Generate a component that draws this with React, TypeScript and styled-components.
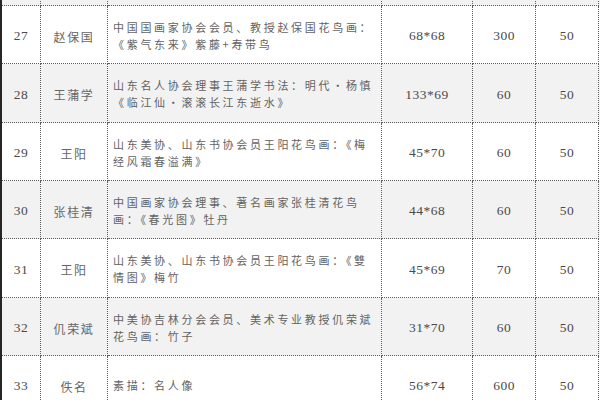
import React from "react";
import styled, { createGlobalStyle } from "styled-components";

const GlobalStyle = createGlobalStyle`
  html, body { margin: 0; padding: 0; background: #ffffff; overflow: hidden; }
`;

const Page = styled.div`
  width: 600px;
  height: 400px;
  overflow: hidden;
  box-sizing: border-box;
  border-left: 2px solid #262626;
  background: #ffffff;
`;

const Table = styled.div`
  display: flex;
  flex-direction: column;
  margin-top: -52px;
`;

const Row = styled.div<{ $shaded: boolean; $tall: boolean }>`
  display: grid;
  grid-template-columns: 39px 67px 274px 91px 63px 63px;
  height: ${(p) => (p.$tall ? 59 : 58)}px;
  background: ${(p) => (p.$shaded ? "#f2f2f2" : "#ffffff")};
`;

const Cell = styled.div`
  box-sizing: border-box;
  border-right: 1px dotted #5e5e5e;
  border-bottom: 1px dotted #5e5e5e;
  display: flex;
  align-items: center;
  justify-content: center;
  padding-top: 3px;
`;

const NumCell = styled(Cell)`
  font-family: "Liberation Serif", "Times New Roman", serif;
  font-size: 13.5px;
  letter-spacing: 0.5px;
  color: #4a4a4a;
`;

const NameCell = styled(Cell)`
  font-family: "Noto Sans CJK SC", "Noto Sans", sans-serif;
  font-size: 12px;
  letter-spacing: 1.6px;
  color: #666666;
`;

const DescCell = styled(Cell)`
  justify-content: flex-start;
  padding-left: 5px;
  padding-top: 2px;
  font-family: "Noto Sans CJK SC", "Noto Sans", sans-serif;
  font-size: 11px;
  letter-spacing: 2.7px;
  line-height: 17px;
  color: #636363;
`;

const DescText = styled.span`
  display: block;
  width: 100%;
`;

type Item = {
  no: string;
  name: string;
  desc: string;
  size: string;
  price: string;
  extra: string;
};

const items: Item[] = [
  { no: "", name: "", desc: "", size: "", price: "", extra: "" },
  {
    no: "27",
    name: "赵保国",
    desc: "中国国画家协会会员、教授赵保国花鸟画：《紫气东来》紫藤+寿带鸟",
    size: "68*68",
    price: "300",
    extra: "50",
  },
  {
    no: "28",
    name: "王蒲学",
    desc: "山东名人协会理事王蒲学书法：明代・杨慎《临江仙・滚滚长江东逝水》",
    size: "133*69",
    price: "60",
    extra: "50",
  },
  {
    no: "29",
    name: "王阳",
    desc: "山东美协、山东书协会员王阳花鸟画：《梅经风霜春溢满》",
    size: "45*70",
    price: "60",
    extra: "50",
  },
  {
    no: "30",
    name: "张桂清",
    desc: "中国画家协会理事、著名画家张桂清花鸟画：《春光图》牡丹",
    size: "44*68",
    price: "60",
    extra: "50",
  },
  {
    no: "31",
    name: "王阳",
    desc: "山东美协、山东书协会员王阳花鸟画：《雙情图》梅竹",
    size: "45*69",
    price: "70",
    extra: "50",
  },
  {
    no: "32",
    name: "仉荣斌",
    desc: "中美协吉林分会会员、美术专业教授仉荣斌花鸟画：竹子",
    size: "31*70",
    price: "60",
    extra: "50",
  },
  {
    no: "33",
    name: "佚名",
    desc: "素描：名人像",
    size: "56*74",
    price: "600",
    extra: "50",
  },
];

const tallRows = new Set([2, 5]);

export default function App() {
  return (
    <>
      <GlobalStyle />
      <Page>
        <Table>
          {items.map((it, i) => (
            <Row key={i} $shaded={i % 2 === 0} $tall={tallRows.has(i)}>
              <NumCell>{it.no}</NumCell>
              <NameCell>{it.name}</NameCell>
              <DescCell>
                <DescText>{it.desc}</DescText>
              </DescCell>
              <NumCell>{it.size}</NumCell>
              <NumCell>{it.price}</NumCell>
              <NumCell>{it.extra}</NumCell>
            </Row>
          ))}
        </Table>
      </Page>
    </>
  );
}
